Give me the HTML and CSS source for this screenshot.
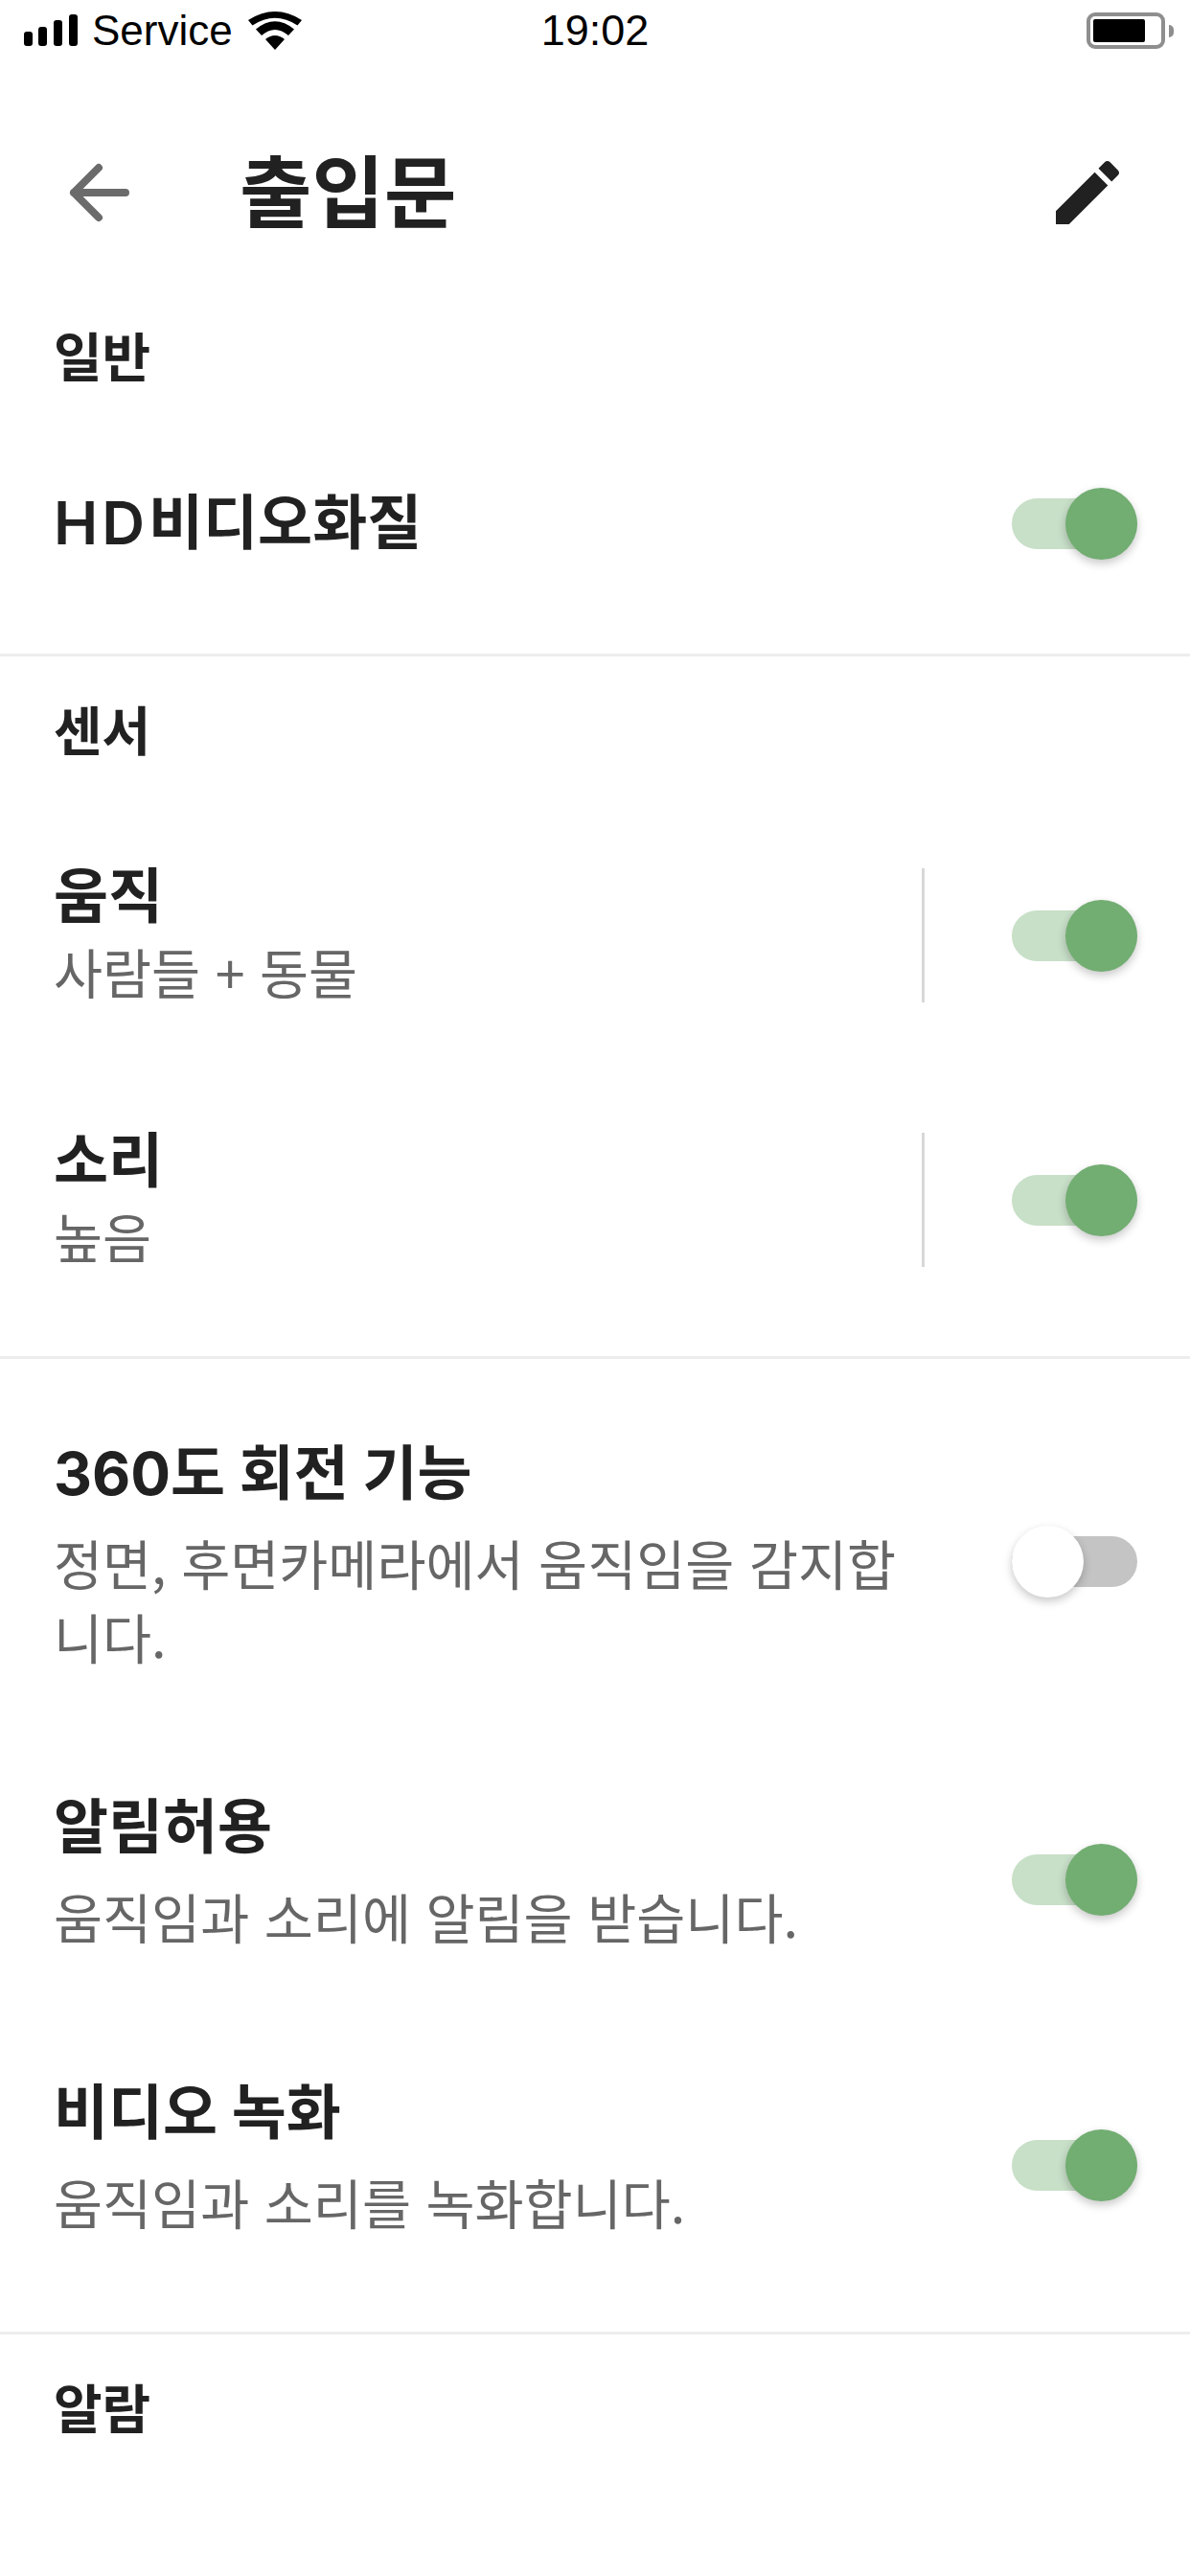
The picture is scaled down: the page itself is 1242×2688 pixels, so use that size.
FILE: index.html
```html
<!DOCTYPE html>
<html lang="ko">
<head>
  <meta charset="UTF-8">
  <title>출입문</title>
  <link rel="stylesheet" href="styles.css">
</head>
<body>
  <div class="status-bar">
    <div class="status-left">
      <svg class="signal" width="58" height="34" viewBox="0 0 58 34">
        <rect x="1" y="18" width="9" height="15" rx="3"/>
        <rect x="16" y="13" width="9" height="20" rx="3"/>
        <rect x="32" y="6" width="9" height="27" rx="3"/>
        <rect x="48" y="0" width="9" height="33" rx="3"/>
      </svg>
      <span class="carrier">Service</span>
      <svg class="wifi" width="56" height="40" viewBox="0 0 56 40">
        <path d="M28 40 L18 29 Q28 21 38 29 Z"/>
        <path d="M14 25 L8 18.500 Q28 2 48 18.500 L42 25 Q28 13 14 25 Z"/>
        <path d="M4.500 14.500 L0 9 Q28 -9 56 9 L51.500 14.500 Q28 -1 4.500 14.500 Z"/>
      </svg>
    </div>
    <div class="status-time">19:02</div>
    <div class="battery">
      <div class="battery-body"><div class="battery-level"></div></div>
      <div class="battery-nub"></div>
    </div>
  </div>

  <div class="header">
    <svg class="back" width="66" height="64" viewBox="0 0 66 64">
      <path d="M60 32 H6 M32 6 L6 32 L32 58"/>
    </svg>
    <h1>출입문</h1>
    <svg class="edit" width="88" height="88" viewBox="0 0 24 24">
      <path d="M3 17.250V21h3.750L17.810 9.940l-3.750-3.750L3 17.250zM20.710 7.040c.39-.39.39-1.020 0-1.410l-2.340-2.340c-.39-.39-1.020-.39-1.410 0l-1.830 1.830 3.750 3.750 1.830-1.830z"/>
    </svg>
  </div>

  <!-- General -->
  <div class="section">
    <div class="section-label">일반</div>
    <div class="row row-hd">
      <div class="row-text"><div class="row-title"><span class="latin">HD</span>비디오화질</div></div>
      <div class="toggle on"><div class="knob"></div></div>
    </div>
  </div>

  <!-- Sensors -->
  <div class="section section-sensor">
    <div class="section-label">센서</div>
    <div class="row row-sensor">
      <div class="row-text">
        <div class="row-title">움직</div>
        <div class="row-sub">사람들 + 동물</div>
      </div>
      <div class="vline"></div>
      <div class="toggle on"><div class="knob"></div></div>
    </div>
    <div class="row row-sensor">
      <div class="row-text">
        <div class="row-title">소리</div>
        <div class="row-sub">높음</div>
      </div>
      <div class="vline"></div>
      <div class="toggle on"><div class="knob"></div></div>
    </div>
  </div>

  <!-- Options -->
  <div class="section section-options">
    <div class="row row-tall">
      <div class="row-text narrow">
        <div class="row-title">360도 회전 기능</div>
        <div class="row-sub">정면, 후면카메라에서 움직임을 감지합니다.</div>
      </div>
      <div class="toggle"><div class="knob"></div></div>
    </div>
    <div class="row row-option">
      <div class="row-text">
        <div class="row-title">알림허용</div>
        <div class="row-sub">움직임과 소리에 알림을 받습니다.</div>
      </div>
      <div class="toggle on"><div class="knob"></div></div>
    </div>
    <div class="row row-option">
      <div class="row-text">
        <div class="row-title">비디오 녹화</div>
        <div class="row-sub">움직임과 소리를 녹화합니다.</div>
      </div>
      <div class="toggle on"><div class="knob"></div></div>
    </div>
  </div>

  <div class="section section-alarm">
    <div class="section-label">알람</div>
  </div>
</body>
</html>
```

FILE: styles.css
```css
* { box-sizing: border-box; }

body {
  margin: 0;
  background: #fff;
  color: #212121;
  font-family: "Noto Sans CJK KR", "Noto Sans", sans-serif;
}

.status-bar {
  height: 60px;
  display: flex;
  align-items: center;
  position: relative;
  padding: 4px 17px 0 24px;
  color: #000;
  font-family: "Liberation Sans", Arial, sans-serif;
  font-size: 44px;
}

.status-left {
  display: flex;
  align-items: center;
  flex: 1;
}

.signal { margin-right: 14px; }

.carrier { margin-right: 16px; }

.status-time {
  position: absolute;
  left: 0;
  right: 0;
  top: 9px;
  text-align: center;
  font-size: 45px;
  line-height: 46px;
}

.battery {
  display: flex;
  align-items: center;
}

.battery-body {
  width: 82px;
  height: 38px;
  padding: 3px;
  border: 4px solid #8e8e8e;
  border-radius: 9px;
}

.battery-level {
  width: 54px;
  height: 24px;
  background: #000;
  border-radius: 2px;
}

.battery-nub {
  width: 5px;
  height: 13px;
  margin-left: 4px;
  background: #8e8e8e;
  border-radius: 0 7px 7px 0;
}

.header {
  height: 274px;
  display: flex;
  align-items: center;
  padding: 8px 63px 0 71px;
}

.back {
  fill: none;
  stroke: #6b6b6b;
  stroke-width: 8;
  stroke-linecap: round;
  stroke-linejoin: round;
}

h1 {
  flex: 1;
  margin: 0 0 10px 113px;
  font-size: 82px;
  font-weight: 700;
  line-height: 100px;
}

.edit { fill: #212121; }

.section { border-bottom: 3px solid #ededed; }

.section-sensor {
  padding-top: 39px;
  padding-bottom: 25px;
}

.section-options { padding-bottom: 25px; }

.section-alarm {
  border-bottom: none;
  padding-top: 39px;
}

.section-label {
  height: 76px;
  padding-left: 56px;
  font-size: 55px;
  font-weight: 700;
  line-height: 71px;
}

.section-sensor .section-label { margin-bottom: 38px; }

.row {
  display: flex;
  align-items: center;
  padding: 0 55px 0 56px;
}

.row-hd { height: 272px; }

.row-sensor { height: 276px; }

.row-tall {
  height: 394px;
  padding-top: 28px;
}

.row-option { height: 298px; }

.row-text { flex: 1; }

.row-text.narrow {
  flex: none;
  width: 890px;
  margin-right: 110px;
  margin-bottom: 12px;
}

.row-option .row-text { padding-bottom: 17px; }

.row-title {
  font-family: Inter, "Noto Sans CJK KR", sans-serif;
  font-size: 62px;
  font-weight: 700;
  line-height: 76px;
}

.latin {
  font-weight: 600;
  letter-spacing: 4px;
}

.row-sub {
  margin-top: 17px;
  color: #666;
  font-size: 55.500px;
  line-height: 75px;
}

.narrow .row-sub {
  margin-top: 16px;
  line-height: 77px;
}

.row-sensor .row-text { padding-bottom: 3px; }

.row-sensor .row-sub { margin-top: 2px; }

.vline {
  width: 3px;
  height: 140px;
  margin-right: 91px;
  background: #d8d8d8;
}

.toggle {
  width: 131px;
  height: 53px;
  position: relative;
  flex: none;
  background: #c4c4c4;
  border-radius: 27px;
}

.toggle.on { background: #c8dfc8; }

.knob {
  position: absolute;
  left: 0;
  top: -11px;
  width: 75px;
  height: 75px;
  background: #fff;
  border-radius: 50%;
  box-shadow: 0 4px 10px rgba(0, 0, 0, 0.22);
}

.toggle.on .knob {
  left: 56px;
  background: #72ad72;
}
```
